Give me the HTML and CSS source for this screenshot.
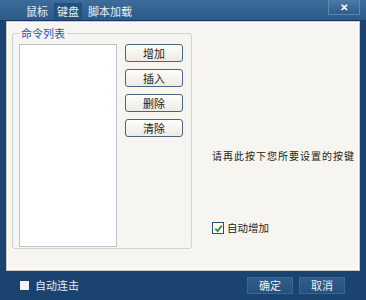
FILE: index.html
```html
<!DOCTYPE html>
<html lang="zh-CN">
<head>
  <meta charset="UTF-8">
  <title>按键设置</title>
  <link rel="stylesheet" href="styles.css">
</head>
<body>
  <div class="window">
    <div class="titlebar">
      <div class="tabs">
        <span class="tab">鼠标</span>
        <span class="tab active">键盘</span>
        <span class="tab">脚本加载</span>
      </div>
      <div class="close">✕</div>
    </div>

    <div class="panel">
      <div class="group">
        <span class="legend">命令列表</span>
        <div class="group-body">
          <div class="listbox"></div>
          <div class="btn-col">
            <button class="btn">增加</button>
            <button class="btn">插入</button>
            <button class="btn">删除</button>
            <button class="btn">清除</button>
          </div>
        </div>
      </div>
      <div class="key-area">
        <p class="hint">请再此按下您所要设置的按键</p>
        <label class="check">
          <span class="box checked">
            <svg width="9" height="9" viewBox="0 0 9 9"><path d="M1.3 4.6 L3.6 7 L7.8 1.6" fill="none" stroke="#2e9a2e" stroke-width="1.9"/></svg>
          </span>
          自动增加
        </label>
      </div>
    </div>

    <div class="footer">
      <label class="check light">
        <span class="box plain"></span>
        自动连击
      </label>
      <div class="footer-btns">
        <button class="fbtn">确定</button>
        <button class="fbtn">取消</button>
      </div>
    </div>
  </div>
</body>
</html>
```

FILE: styles.css
```css
body {
  margin: 0;
  font-family: "Noto Sans CJK SC", "Noto Sans", sans-serif;
  font-size: 11px;
  background: #1a4370;
}

.window {
  width: 366px;
  height: 300px;
  background: #1a4370;
  display: flex;
  flex-direction: column;
}

.titlebar {
  height: 20px;
  background: linear-gradient(#3d6c9a, #2d5b89);
  border-bottom: 1px solid #163a62;
  display: flex;
  justify-content: space-between;
}

.tabs {
  display: flex;
  padding-left: 23px;
  padding-top: 3px;
}

.tab {
  color: #e8eef5;
  padding: 1px 3px 0;
  margin-right: 3px;
  line-height: 15px;
}

.tab.active {
  background: #24507f;
}

.close {
  width: 30px;
  height: 14px;
  margin-right: 6px;
  background: linear-gradient(#4c7aa6, #2f5d8b);
  border: 1px solid #5a86b0;
  border-top: none;
  color: #fff;
  font-size: 10px;
  font-weight: bold;
  text-align: center;
  line-height: 14px;
}

.panel {
  height: 246px;
  margin: 1px 7px 0 7px;
  background: #f6f5ef;
  border: 1px solid #fff;
  box-shadow: 0 0 0 1px #c9c7bd;
  display: flex;
}

.group {
  width: 178px;
  height: 214px;
  margin: 10px 0 0 4px;
  border: 1px solid #cfd2d6;
  border-radius: 3px;
  position: relative;
}

.legend {
  position: absolute;
  top: -8px;
  left: 6px;
  padding: 0 2px;
  background: #f6f5ef;
  color: #1c55c8;
  line-height: 14px;
}

.group-body {
  display: flex;
  padding: 10px 0 0 6px;
}

.listbox {
  width: 96px;
  height: 201px;
  background: #fff;
  border: 1px solid #b9c2cd;
}

.btn-col {
  display: flex;
  flex-direction: column;
  gap: 7px;
  margin-left: 8px;
}

.btn {
  width: 58px;
  height: 18px;
  padding: 0;
  font-family: inherit;
  font-size: 11px;
  color: #222;
  background: linear-gradient(#fdfdfb, #ecebe3);
  border: 1px solid #4a6482;
  border-radius: 3px;
  line-height: 15px;
}

.key-area {
  flex: 1;
  padding-left: 20px;
  display: flex;
  flex-direction: column;
}

.hint {
  margin: 126px 0 0;
  color: #222;
  font-size: 10px;
  letter-spacing: 1px;
  line-height: 14px;
}

.check {
  display: flex;
  align-items: center;
  gap: 3px;
  color: #222;
  line-height: 14px;
}

.key-area .check {
  margin-top: 58px;
  font-size: 10.5px;
}

.box {
  width: 10px;
  height: 10px;
  display: flex;
  align-items: center;
  justify-content: center;
}

.box.checked {
  border: 1px solid #2a4f78;
  background: #fff;
}

.footer {
  flex: 1;
  display: flex;
  justify-content: space-between;
  align-items: center;
  padding: 0 21px 0 20px;
}

.check.light {
  color: #e6edf5;
  gap: 6px;
}

.box.plain {
  width: 9px;
  height: 9px;
  background: #f2f4f7;
}

.footer-btns {
  display: flex;
  gap: 6px;
}

.fbtn {
  width: 46px;
  height: 17px;
  padding: 0;
  font-family: inherit;
  font-size: 11px;
  color: #e8eef5;
  background: linear-gradient(#315d8b, #26507c);
  border: 1px solid #3a6794;
  line-height: 15px;
}
```
